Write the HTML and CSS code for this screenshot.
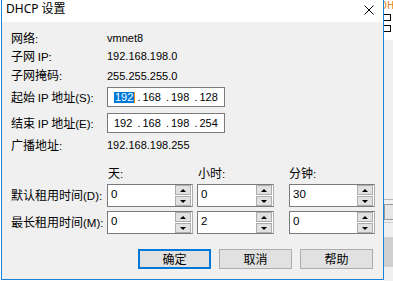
FILE: index.html
```html
<!DOCTYPE html>
<html>
<head>
<meta charset="utf-8">
<link rel="stylesheet" href="styles.css">
</head>
<body>
<div class="screen">
  <div class="dialog">
    <div class="titlebar">
      <span class="title">DHCP 设置</span>
      <svg class="close" width="10" height="10" viewBox="0 0 10 10"><path d="M0.5 0.5 L9.5 9.5 M9.5 0.5 L0.5 9.5" stroke="#000" stroke-width="1"/></svg>
    </div>
    <div class="body">
      <div class="row r1"><span class="label">网络<span class="lat">:</span></span><span class="value">vmnet8</span></div>
      <div class="row r2"><span class="label">子网 <span class="lat">IP:</span></span><span class="value">192.168.198.0</span></div>
      <div class="row r3"><span class="label">子网掩码<span class="lat">:</span></span><span class="value">255.255.255.0</span></div>
      <div class="row r4"><span class="label">起始 <span class="lat">IP</span> 地址<span class="lat">(S):</span></span>
        <div class="ipbox">
          <span class="seg"><span class="sel">192</span><span class="caret"></span></span><span class="dot">.</span>
          <span class="seg">168</span><span class="dot">.</span>
          <span class="seg">198</span><span class="dot">.</span>
          <span class="seg">128</span>
        </div>
      </div>
      <div class="row r5"><span class="label">结束 <span class="lat">IP</span> 地址<span class="lat">(E):</span></span>
        <div class="ipbox">
          <span class="seg">192</span><span class="dot">.</span>
          <span class="seg">168</span><span class="dot">.</span>
          <span class="seg">198</span><span class="dot">.</span>
          <span class="seg">254</span>
        </div>
      </div>
      <div class="row r6"><span class="label">广播地址<span class="lat">:</span></span><span class="value">192.168.198.255</span></div>
      <div class="row r7"><span class="label"></span><span class="head h1">天<span class="lat">:</span></span><span class="head h2">小时<span class="lat">:</span></span><span class="head h3">分钟<span class="lat">:</span></span></div>
      <div class="row r8"><span class="label">默认租用时间<span class="lat">(D):</span></span>
        <div class="spin w1"><div class="edit">0</div><div class="arrows"><span class="btn"><i class="up"></i></span><span class="btn"><i class="down"></i></span></div></div>
        <div class="spin w2"><div class="edit">0</div><div class="arrows"><span class="btn"><i class="up"></i></span><span class="btn"><i class="down"></i></span></div></div>
        <div class="spin w3"><div class="edit">30</div><div class="arrows"><span class="btn"><i class="up"></i></span><span class="btn"><i class="down"></i></span></div></div>
      </div>
      <div class="row r9"><span class="label">最长租用时间<span class="lat">(M):</span></span>
        <div class="spin w1"><div class="edit">0</div><div class="arrows"><span class="btn"><i class="up"></i></span><span class="btn"><i class="down"></i></span></div></div>
        <div class="spin w2"><div class="edit">2</div><div class="arrows"><span class="btn"><i class="up"></i></span><span class="btn"><i class="down"></i></span></div></div>
        <div class="spin w3"><div class="edit">0</div><div class="arrows"><span class="btn"><i class="up"></i></span><span class="btn"><i class="down"></i></span></div></div>
      </div>
      <div class="buttons">
        <button class="pbtn default">确定</button>
        <button class="pbtn">取消</button>
        <button class="pbtn">帮助</button>
      </div>
    </div>
  </div>
  <div class="behind">
    <div class="bh-top"><span class="bh-txt">DH</span><span class="bh-ic"></span><span class="bh-ic"></span></div>
    <div class="bh-mid"></div>
    <div class="bh-line"></div>
    <div class="bh-btn"></div>
    <div class="bh-line2"></div>
    <div class="bh-dark"></div>
    <div class="bh-low"></div>
  </div>
</div>
</body>
</html>
```

FILE: styles.css
```css
html, body {
  margin: 0;
  padding: 0;
  background: #ffffff;
}
.screen {
  width: 393px;
  height: 281px;
  overflow: hidden;
  display: flex;
  align-items: flex-start;
  font-family: "Noto Sans CJK SC", "Noto Sans", sans-serif;
  font-size: 12px;
  color: #000;
}
.lat {
  font-family: "Liberation Sans", "Noto Sans", sans-serif;
  font-size: 11.5px;
}
.dialog {
  margin-left: 1px;
  width: 381px;
  height: 279px;
  border-left: 1px solid #1883d7;
  border-right: 1px solid #1883d7;
  border-bottom: 1px solid #1883d7;
  background: #f0f0f0;
  display: flex;
  flex-direction: column;
}
.titlebar {
  height: 22px;
  background: #ffffff;
  display: flex;
  align-items: center;
  justify-content: space-between;
  padding: 0 9px 0 4px;
}
.title {
  font-family: "Noto Sans", "Noto Sans CJK SC", sans-serif;
  font-size: 12px;
  line-height: 16px;
  margin-top: -4px;
}
.close {
  margin-top: -3px;
}
.body {
  display: flex;
  flex-direction: column;
  padding-left: 9px;
}
.row {
  display: flex;
  align-items: center;
  line-height: 16px;
}
.label {
  width: 96px;
  flex: none;
  white-space: nowrap;
}
.value {
  white-space: nowrap;
  font-family: "Liberation Sans", "Noto Sans", sans-serif;
  font-size: 11px;
}
.r1 { margin-top: 7px; height: 18px; }
.r2 { height: 18px; }
.r3 { height: 21px; }
.r4 { margin-top: 1px; height: 20px; }
.r5 { margin-top: 6px; height: 20px; }
.r6 { margin-top: 3px; height: 18px; }
.r7 { margin-top: 10px; height: 18px; }
.r8 { margin-top: 2px; height: 23px; }
.r9 { margin-top: 4px; height: 23px; }

.ipbox {
  box-sizing: border-box;
  width: 118px;
  height: 20px;
  border: 1px solid #7a7a7a;
  background: #fff;
  display: flex;
  align-items: center;
  padding-left: 6px;
  white-space: nowrap;
  font-family: "Liberation Sans", "Noto Sans", sans-serif;
  font-size: 11px;
}
.seg {
  width: 23.5px;
  flex: none;
  display: flex;
  align-items: center;
}
.dot {
  width: 5px;
  flex: none;
}
.sel {
  background: #0078d7;
  color: #fff;
  padding: 0 1px;
  line-height: 11px;
}
.caret {
  width: 1px;
  height: 11px;
  background: #f08a1c;
}
.head {
  flex: none;
}
.h1 { width: 90px; padding-left: 1px; }
.h2 { width: 91px; }
.h3 { }

.spin {
  box-sizing: border-box;
  height: 23px;
  display: flex;
  flex: none;
  background: #fff;
  border: 1px solid #7a7a7a;
  border-right-color: #adadad;
}
.w1 { width: 86px; margin-right: 4px; }
.w2 { width: 77px; margin-right: 15px; }
.w3 { width: 86px; }
.edit {
  flex: 1;
  padding: 3px 0 0 3px;
  line-height: 12px;
  font-family: "Liberation Sans", "Noto Sans", sans-serif;
  font-size: 11.5px;
}
.arrows {
  width: 16px;
  display: flex;
  flex-direction: column;
  justify-content: center;
  gap: 1px;
  padding-right: 1px;
}
.btn {
  box-sizing: border-box;
  height: 10px;
  border: 1px solid #adadad;
  background: #e1e1e1;
  display: flex;
  align-items: center;
  justify-content: center;
}
.up {
  width: 0; height: 0;
  border-left: 3px solid transparent;
  border-right: 3px solid transparent;
  border-bottom: 3px solid #000;
}
.down {
  width: 0; height: 0;
  border-left: 3px solid transparent;
  border-right: 3px solid transparent;
  border-top: 3px solid #000;
}
.buttons {
  margin-top: 15px;
  display: flex;
  padding-left: 127px;
  gap: 8px;
}
.pbtn {
  box-sizing: border-box;
  width: 73px;
  height: 20px;
  border: 1px solid #adadad;
  background: #e1e1e1;
  font-family: "Noto Sans CJK SC", sans-serif;
  font-size: 12px;
  line-height: 16px;
  padding: 0;
  color: #000;
}
.pbtn.default {
  border: 2px solid #0078d7;
}

.behind {
  width: 9px;
  height: 281px;
  flex: none;
  display: flex;
  flex-direction: column;
  background: #f0f0f0;
  overflow: hidden;
}
.bh-top {
  height: 40px;
  background: #fff;
  display: flex;
  flex-direction: column;
  font-size: 10px;
  line-height: 10px;
}
.bh-txt { color: #e07a10; margin-left: -4px; }
.bh-ic {
  margin-top: 4px;
  width: 6px;
  height: 5px;
  border: 1px solid #000;
  border-left: none;
}
.bh-mid { height: 159px; }
.bh-line { height: 1px; background: #b8b8b8; }
.bh-btn { height: 14px; margin-top: 4px; border: 1px solid #9a9a9a; border-right: none; background: #e6e6e6; }
.bh-line2 { height: 1px; margin-top: 2px; background: #d0d0d0; }
.bh-dark { height: 30px; margin-top: 14px; background: #cfcfcf; }
.bh-low { flex: 1; }
```
